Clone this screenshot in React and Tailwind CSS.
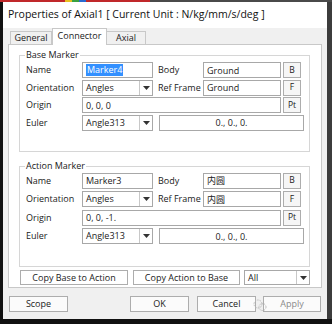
import React from "react";

const Arrow = () => (
  <svg width="7" height="4" viewBox="0 0 7 4"><path d="M0 0H7L3.5 4Z" fill="#333" /></svg>
);

function Input({ children, w, center, selected }) {
  return (
    <div className={`h-full border border-[#a8a8a8] bg-white flex items-center px-[3px] ${center ? "justify-center" : ""} ${w}`}>
      {selected ? <span className="bg-[#3390ff] text-white px-[1px] leading-[12px]">{children}</span> : <span className="leading-none">{children}</span>}
    </div>
  );
}

function Sel({ children, w }) {
  return (
    <div className={`h-full border border-[#a8a8a8] bg-white flex ${w}`}>
      <div className="flex-1 flex items-center px-[3px]">{children}</div>
      <div className="w-[13px] border-l border-[#c8c8c8] flex items-center justify-center"><Arrow /></div>
    </div>
  );
}

function Btn({ children }) {
  return (
    <div className="ml-[2px] h-full w-[18px] border border-[#adadad] bg-[#f6f6f6] flex items-center justify-center text-[8.5px]">{children}</div>
  );
}

function Group({ title, name, body, refFrame, origin, className, gap, pb }) {
  return (
    <div className={`relative border border-[#d6d6d6] ${className}`}>
      <div className="absolute left-[5px] top-[-8px] bg-white px-[1px] leading-[14px]">{title}</div>
      <div className={`flex flex-col pt-[6px] pl-[6px] ${gap} ${pb}`}>
        <div className="flex items-center h-[16px]">
          <div className="w-[56px]">Name</div>
          <Input w="w-[71px]" selected={title === "Base Marker"}>{name}</Input>
          <div className="w-[45px] ml-[5px]">Body</div>
          <Input w="w-[78px]">{body}</Input>
          <Btn>B</Btn>
        </div>
        <div className="flex items-center h-[16px]">
          <div className="w-[56px]">Orientation</div>
          <Sel w="w-[71px]">Angles</Sel>
          <div className="w-[45px] ml-[5px] whitespace-nowrap">Ref Frame</div>
          <Input w="w-[78px]">{refFrame}</Input>
          <Btn>F</Btn>
        </div>
        <div className="flex items-center h-[16px]">
          <div className="w-[56px]">Origin</div>
          <Input w="w-[199px]">{origin}</Input>
          <Btn>Pt</Btn>
        </div>
        <div className="flex items-center h-[16px]">
          <div className="w-[56px]">Euler</div>
          <Sel w="w-[71px]">Angle313</Sel>
          <div className="ml-[6px] h-full"><Input w="w-[145px]" center>0., 0., 0.</Input></div>
        </div>
      </div>
    </div>
  );
}

export default function App() {
  return (
    <div className="w-[332px] h-[324px] bg-[#111] flex flex-col overflow-hidden font-['Open_Sans','Noto_Sans_CJK_SC',sans-serif] text-[9px] text-[#1a1a1a]">
      <div className="h-[2px] flex shrink-0">
        <div className="w-[65px] bg-[#c0282a]" />
        <div className="w-[7px] bg-[#e8c020]" />
        <div className="w-[7px] bg-[#3aa040]" />
        <div className="w-[7px] bg-[#2a6ad0]" />
        <div className="w-[64px] bg-[#c0282a]" />
        <div className="flex-1 bg-[#4a4a4a]" />
      </div>
      <div className="flex h-[317px] shrink-0">
        <div className="w-[3px] bg-[#111]" />
        <div className="w-[324px] flex flex-col bg-[#f0f0f0]">
          <div className="h-[26px] bg-white flex items-center pl-[5px] text-[10.5px] text-[#111]">
            Properties of Axial1 [ Current Unit : N/kg/mm/s/deg ]
          </div>
          <div className="flex h-[16px] items-end pl-[7px] relative z-10">
            <div className="h-[13px] w-[42px] border border-b-0 border-[#c8c8c8] bg-[#f0f0f0] flex items-center justify-center">General</div>
            <div className="h-[17px] w-[55px] border border-b-0 border-[#c8c8c8] bg-white flex items-center justify-center mb-[-1px] pb-[2px]">Connector</div>
            <div className="h-[13px] w-[39px] border border-b-0 border-l-0 border-[#c8c8c8] bg-[#f0f0f0] flex items-center justify-center">Axial</div>
          </div>
          <div className="mx-[5px] h-[244px] border border-[#c8c8c8] bg-white flex flex-col pl-[10px] pr-[11px]">
            <Group title="Base Marker" name="Marker4" body="Ground" refFrame="Ground" origin="0, 0, 0" className="mt-[10px]" gap="gap-[1.5px]" pb="pb-[20px]" />
            <Group title="Action Marker" name="Marker3" body="内圆" refFrame="内圆" origin="0, 0, -1." className="mt-[14px]" gap="gap-[2.5px]" pb="pb-[22px]" />
            <div className="flex h-[15px] mt-[3px] ml-[1px]">
              <div className="w-[108px] border border-[#adadad] bg-white flex items-center justify-center">Copy Base to Action</div>
              <div className="ml-[5px] w-[107px] border border-[#adadad] bg-white flex items-center justify-center">Copy Action to Base</div>
              <div className="ml-[4px] h-full"><Sel w="w-[66px]">All</Sel></div>
            </div>
          </div>
          <div className="flex h-[16px] mt-[8px] pl-[6px]">
            <div className="w-[59px] border border-[#adadad] bg-[#fbfbfb] flex items-center justify-center">Scope</div>
            <div className="ml-[62px] w-[59px] border border-[#adadad] bg-[#fbfbfb] flex items-center justify-center">OK</div>
            <div className="ml-[8px] w-[59px] border border-[#adadad] bg-[#fbfbfb] flex items-center justify-center relative">
              Cancel
              <svg className="absolute right-[-12px] top-[1px]" width="14" height="14" viewBox="0 0 14 14">
                <circle cx="5" cy="6" r="4" fill="none" stroke="#bbb" strokeWidth="1" strokeDasharray="1.5 1" />
                <circle cx="9.5" cy="9" r="3.5" fill="none" stroke="#bbb" strokeWidth="1" strokeDasharray="1.5 1" />
              </svg>
            </div>
            <div className="ml-[7px] w-[58px] border border-[#adadad] bg-[#fbfbfb] flex items-center justify-center text-[#8a8a8a]">
              Apply
            </div>
          </div>
        </div>
        <div className="w-[5px] bg-[#3c3c3c]" />
      </div>
    </div>
  );
}
